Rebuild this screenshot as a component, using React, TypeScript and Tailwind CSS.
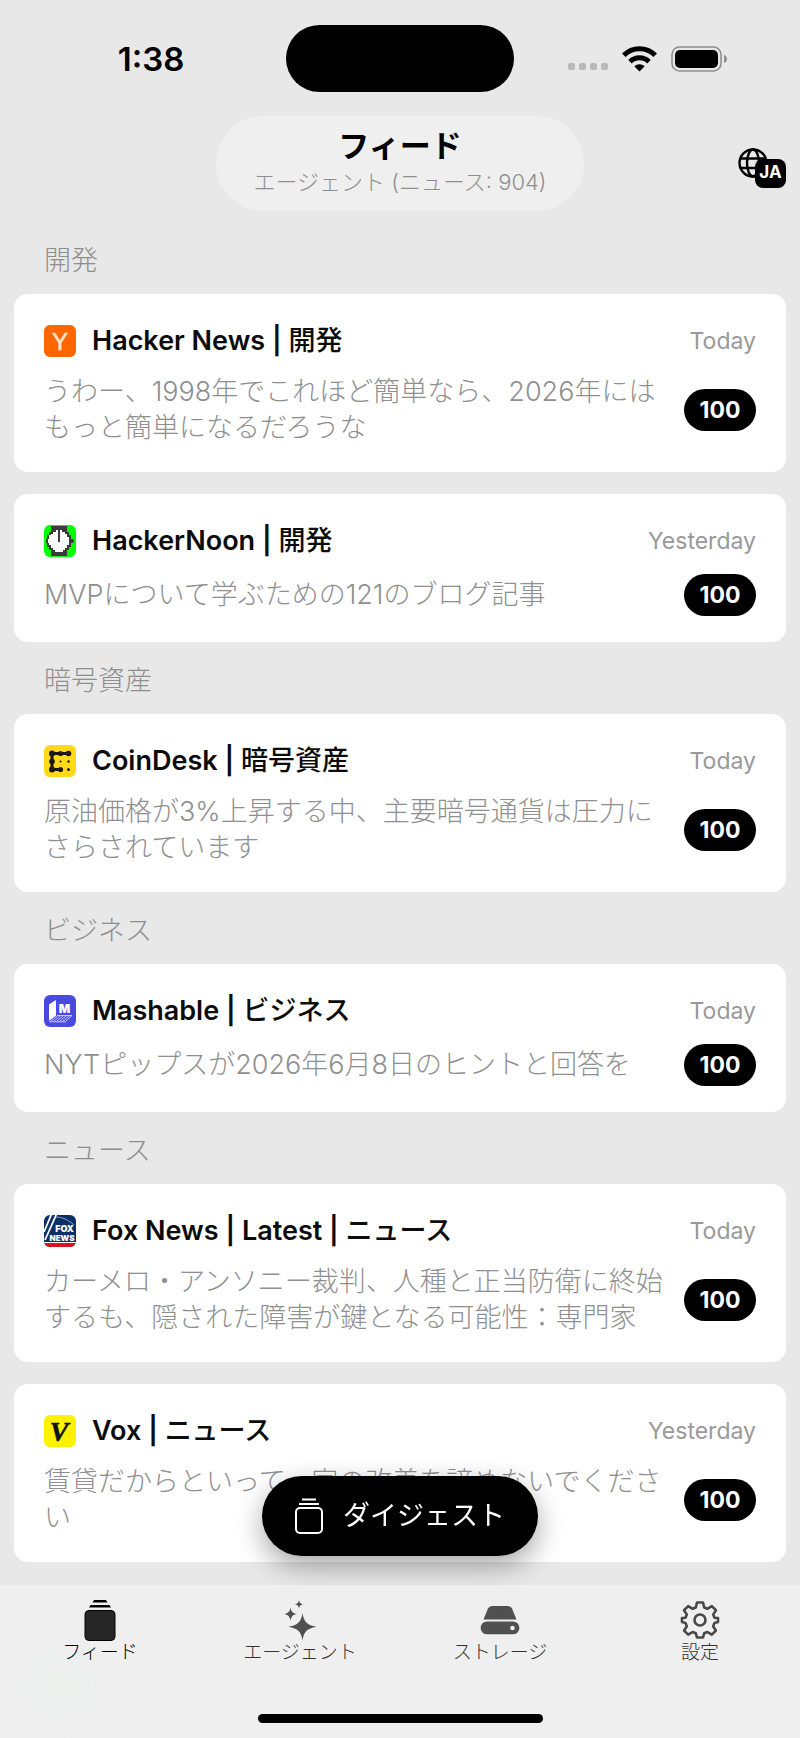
import type { ReactNode } from "react";

type Feed = {
  name: string;
  category: string;
  date: string;
  text: string;
  count: number;
  icon: ReactNode;
};

const YCombinatorIcon = () => (
  <svg viewBox="0 0 32 32" className="size-8 rounded-md bg-[#ff6600]">
    <text x="16" y="25" textAnchor="middle" fontSize="24" fill="#ffe3d0" stroke="#ffe3d0" strokeWidth=".6" fontFamily="Liberation Sans, sans-serif">Y</text>
  </svg>
);

const HackerNoonIcon = () => (
  <svg viewBox="0 0 32 32" shapeRendering="crispEdges" className="size-8 rounded-md bg-[#00ff00]">
    <path fill="#3b3b3b" d="M7 1h16v6h2v3h2v4h2v1h1v2h-1v1h-2v4h-2v3h-2v6H7v-6H5v-3H3v-4H2v-4h1v-4h2V7h2z" />
    <path fill="#fff" d="M9 7h3V5h6v2h3v2h2v3h2v8h-2v3h-2v2h-2v2h-8v-2H9v-2H7v-3H5v-2H4v-4h1v-4h2V9h2z" />
    <path fill="#3b3b3b" d="M10 5h2v2h-2zM18 5h2v2h-2zM14 5h2v12h-2z" />
  </svg>
);

const CoinDeskIcon = () => (
  <svg viewBox="0 0 32 32" className="size-8 rounded-md bg-[#ffd91a]">
    <path stroke="#1c1a10" strokeWidth="3" fill="none" d="M25 8.500H8V24.500h9" />
    <g fill="#1c1a10">
      <circle cx="8" cy="8.500" r="3" />
      <circle cx="16.500" cy="8.500" r="2.600" />
      <circle cx="24.500" cy="8.500" r="2.800" />
      <circle cx="8" cy="16.500" r="2.800" />
      <circle cx="8" cy="24.500" r="3" />
      <circle cx="16.500" cy="24.500" r="2.600" />
      <circle cx="16.500" cy="16.500" r="1" />
      <circle cx="24.500" cy="16.500" r="1.200" />
      <circle cx="24.500" cy="24.500" r="1.500" />
    </g>
  </svg>
);

const MashableIcon = () => (
  <svg viewBox="0 0 32 32" className="size-8 rounded-md bg-[#4b4ae0]">
    <path fill="#fff" d="M5 9.500 12 5v15.500L5 26z" />
    <text x="20.500" y="17.500" textAnchor="middle" fontSize="12" fontWeight="900" fill="#fff" fontFamily="Inter, sans-serif">M</text>
    <g stroke="#c9c8ff" strokeWidth="1">
      <path d="M6.500 26.500 13.500 20.500M9.500 26.500 16.500 20.500M12.500 26.500 19.500 20.500M15.500 26.500 22.500 20.500M18.500 26.500 25.500 20.500M21.500 26.500 28 20.500M13 20.500h15M5.500 26.800h16.500" />
    </g>
  </svg>
);

const FoxNewsIcon = () => (
  <svg viewBox="0 0 32 32" className="size-8 rounded-md bg-[#0b2f66]">
    <path fill="#d8121f" d="M0 28h32v4H0z" />
    <path fill="#fff" d="M0 27h32v1H0z" />
    <path stroke="#fff" strokeWidth="1.800" d="M0 17 8-2M1 25 13-2" />
    <path stroke="#8fa3c4" strokeWidth="1" fill="none" d="M12 2c6 0 13 3 18 8" />
    <text x="20.500" y="16.500" textAnchor="middle" fontSize="9" fontWeight="900" fill="#fff" fontFamily="Inter, sans-serif">FOX</text>
    <text x="18" y="25.500" textAnchor="middle" fontSize="8" fontWeight="900" fill="#fff" fontFamily="Inter, sans-serif">NEWS</text>
  </svg>
);

const VoxIcon = () => (
  <svg viewBox="0 0 32 32" className="size-8 rounded-md bg-[#fff200]">
    <text x="15" y="26" textAnchor="middle" fontSize="28" fontStyle="italic" fontWeight="700" fill="#111" stroke="#111" strokeWidth=".6" fontFamily="Liberation Serif, serif">V</text>
  </svg>
);

const sections: { title: string; feeds: Feed[] }[] = [
  {
    title: "開発",
    feeds: [
      {
        name: "Hacker News",
        category: "開発",
        date: "Today",
        text: "うわー、1998年でこれほど簡単なら、2026年にはもっと簡単になるだろうな",
        count: 100,
        icon: <YCombinatorIcon />,
      },
      {
        name: "HackerNoon",
        category: "開発",
        date: "Yesterday",
        text: "MVPについて学ぶための121のブログ記事",
        count: 100,
        icon: <HackerNoonIcon />,
      },
    ],
  },
  {
    title: "暗号資産",
    feeds: [
      {
        name: "CoinDesk",
        category: "暗号資産",
        date: "Today",
        text: "原油価格が3%上昇する中、主要暗号通貨は圧力にさらされています",
        count: 100,
        icon: <CoinDeskIcon />,
      },
    ],
  },
  {
    title: "ビジネス",
    feeds: [
      {
        name: "Mashable",
        category: "ビジネス",
        date: "Today",
        text: "NYTピップスが2026年6月8日のヒントと回答を",
        count: 100,
        icon: <MashableIcon />,
      },
    ],
  },
  {
    title: "ニュース",
    feeds: [
      {
        name: "Fox News | Latest",
        category: "ニュース",
        date: "Today",
        text: "カーメロ・アンソニー裁判、人種と正当防衛に終始するも、隠された障害が鍵となる可能性：専門家",
        count: 100,
        icon: <FoxNewsIcon />,
      },
      {
        name: "Vox",
        category: "ニュース",
        date: "Yesterday",
        text: "賃貸だからといって、家の改善を諦めないでください",
        count: 100,
        icon: <VoxIcon />,
      },
    ],
  },
];

const StatusBar = () => (
  <div className="grid grid-cols-[1fr_228px_1fr] items-center pt-[25px]">
    <span className="pl-4 text-center text-[33px] leading-8 font-semibold">1:38</span>
    <div className="h-[67px] rounded-full bg-black" />
    <div className="flex items-center pl-[54px]">
      <div className="flex gap-1 pt-4">
        <span className="size-[7px] rounded-xs bg-[#b9b9b9]" />
        <span className="size-[7px] rounded-xs bg-[#b9b9b9]" />
        <span className="size-[7px] rounded-xs bg-[#b9b9b9]" />
        <span className="size-[7px] rounded-xs bg-[#b9b9b9]" />
      </div>
      <svg viewBox="0 0 35 26" className="ml-[14px] h-[26px] w-[35px]" fill="none" stroke="#000" strokeWidth="5">
        <path d="M1.800 9.200a22.300 22.300 0 0 1 31.400 0" />
        <path d="M8 15.700a13.600 13.600 0 0 1 19 0" />
        <path d="M17.500 25.500 12.300 20.300a7.400 7.400 0 0 1 10.400 0z" fill="#000" stroke="none" />
      </svg>
      <svg viewBox="0 0 56 26" className="ml-[14px] h-[26px] w-14">
        <rect x="1" y="1" width="49" height="24" rx="7.500" fill="none" stroke="#8f8f8f" strokeWidth="1.600" />
        <rect x="4" y="4" width="43" height="18" rx="5" />
        <path d="M53 9c4 1 4 7 0 8z" fill="#8f8f8f" />
      </svg>
    </div>
  </div>
);

const Header = () => (
  <header className="mt-6 grid grid-cols-[1fr_auto_1fr] items-center">
    <div className="col-start-2 flex h-[95px] w-[368px] flex-col items-center justify-center rounded-full bg-[#efefef]">
      <h1 className="text-[31px] leading-9 font-bold">フィード</h1>
      <p className="text-[22px] leading-9 font-light text-[#8f8f8f]">エージェント (ニュース: 904)</p>
    </div>
    <button aria-label="言語" className="relative mt-2 mr-[14px] flex h-10 w-12 items-start justify-self-end">
      <svg viewBox="0 0 30 30" className="size-[30px]" fill="none" stroke="#000" strokeWidth="2.400">
        <circle cx="15" cy="15" r="13.500" />
        <ellipse cx="15" cy="15" rx="6" ry="13.500" />
        <path d="M3 10.500h24M3 20h24" />
      </svg>
      <span className="absolute right-0 bottom-0 flex h-[29px] w-[31px] items-center justify-center rounded-lg bg-black text-[17px] font-bold text-white">
        JA
      </span>
    </button>
  </header>
);

const FeedCard = ({ feed }: { feed: Feed }) => (
  <article className="rounded-[14px] bg-white px-[30px] pt-[31px] pb-[26px]">
    <div className="flex h-8 items-center">
      {feed.icon}
      <h3 className="ml-4 flex-1 text-[27px] leading-8 font-semibold text-[#0c0c0c]">
        {feed.name} | <span className="font-medium">{feed.category}</span>
      </h3>
      <time className="text-[23px] text-[#999]">{feed.date}</time>
    </div>
    <div className="mt-[17px] flex items-center justify-between gap-4">
      <p className="text-[27px] leading-9 font-light text-[#8f8f8f]">{feed.text}</p>
      <span className="flex h-[42px] w-[72px] shrink-0 items-center justify-center rounded-full bg-black text-[23px] font-bold text-white">
        {feed.count}
      </span>
    </div>
  </article>
);

const FeedIcon = () => (
  <svg viewBox="0 0 32 42" className="h-[42px] w-8">
    <rect x="1" y="11.500" width="30" height="30" rx="4" fill="#262626" stroke="#000" strokeWidth="1" />
    <path d="M5 8.500 6.500 6h19l1.500 2.500zM8.500 3.500 10 1h12l1.500 2.500z" fill="#000" />
  </svg>
);

const SparklesIcon = () => (
  <svg viewBox="0 0 34 42" className="h-[42px] w-[34px]" fill="#505050">
    <path d="M19.500 14c1.200 8.500 4.500 12.200 14 13.800-9.500 1.600-12.800 5.300-14 13.800-1.200-8.500-4.500-12.200-14-13.800 9.500-1.600 12.800-5.300 14-13.800z" />
    <path d="M7.500 8.500c.8 4.200 2.200 5.800 6.500 6.600-4.300.8-5.700 2.400-6.500 6.600-.8-4.200-2.200-5.800-6.500-6.600 4.300-.8 5.700-2.400 6.500-6.600z" />
    <path d="M16 1c.5 2.800 1.400 3.700 4.200 4.200-2.800.5-3.700 1.400-4.200 4.200-.5-2.800-1.400-3.700-4.200-4.200 2.800-.5 3.700-1.400 4.200-4.200z" />
  </svg>
);

const DriveIcon = () => (
  <svg viewBox="0 0 40 42" className="h-[42px] w-10" fill="#505050">
    <path d="M3.500 20.500 8 9.500q1.200-2.500 4-2.500h16q2.800 0 4 2.500l4.500 11z" />
    <path fillRule="evenodd" d="M7 22.500h26a6.400 6.400 0 0 1 0 12.800H7a6.400 6.400 0 0 1 0-12.800zM32.500 26.700a2.300 2.300 0 1 0 0 4.600 2.300 2.300 0 0 0 0-4.600z" />
  </svg>
);

const GearIcon = () => (
  <svg viewBox="0 0 40 42" className="h-[42px] w-10" fill="none" stroke="#484848" strokeWidth="2.600" strokeLinejoin="round">
    <g>
      <path d="M17 3.500h6l1.200 5 3.200 1.300 4.400-2.700 4.100 4.100-2.700 4.400 1.300 3.200 3.500.2v4l-3.500 1-1.300 3.200 2.700 4.400-4.100 4.100-4.400-2.700-3.200 1.300-1.200 4.200h-6l-1.200-4.200-3.200-1.300-4.400 2.700-4.100-4.100 2.700-4.400-1.300-3.200-3.500-1v-4l3.500-.2 1.300-3.200-2.700-4.400 4.100-4.100 4.400 2.700 3.200-1.300z" />
      <circle cx="20" cy="21" r="5.500" />
    </g>
  </svg>
);

const tabs = [
  { label: "フィード", icon: <FeedIcon />, active: true },
  { label: "エージェント", icon: <SparklesIcon />, active: false },
  { label: "ストレージ", icon: <DriveIcon />, active: false },
  { label: "設定", icon: <GearIcon />, active: false },
];

const TabBar = () => (
  <footer className="fixed inset-x-0 bottom-0">
    <button className="absolute bottom-full left-1/2 mb-[29px] flex h-20 w-[276px] -translate-x-1/2 items-center justify-center gap-5 rounded-full bg-black text-[27px] text-white shadow-[0_10px_28px_rgba(0,0,0,0.35)]">
      <svg viewBox="0 0 28 36" className="h-9 w-7" fill="none" stroke="#fff" strokeWidth="2">
        <rect x="1" y="10" width="26" height="25" rx="4" />
        <path d="M4 6h20M7 1.500h14" />
      </svg>
      ダイジェスト
    </button>
    <div className="relative overflow-hidden bg-[#efefef] pt-[14px] pb-[15px]">
      <div className="absolute bottom-9 left-11 size-9 rounded-full bg-[#e6f2eb] blur-lg" />
      <nav className="relative grid grid-cols-4">
        {tabs.map((tab) => (
          <a
            key={tab.label}
            href="#"
            className={`flex flex-col items-center text-[19px] leading-6 ${tab.active ? "text-black" : "text-[#333]"}`}
          >
            {tab.icon}
            <span className="font-light">{tab.label}</span>
          </a>
        ))}
      </nav>
      <div className="mx-auto mt-[49px] h-[9px] w-[285px] rounded-full bg-black" />
    </div>
  </footer>
);

const App = () => {
  return (
    <div lang="ja" className="min-h-screen bg-[#e8e8e8] pb-44 font-['Inter','Noto_Sans_CJK_JP',sans-serif] text-black">
      <StatusBar />
      <Header />
      <main className="mt-[11px] px-[14px]">
        {sections.map((section) => (
          <section key={section.title}>
            <h2 className="flex h-[72px] items-center pt-[7px] pl-[30px] text-[27px] font-light text-[#8f8f8f]">{section.title}</h2>
            <div className="flex flex-col gap-[22px]">
              {section.feeds.map((feed) => (
                <FeedCard key={feed.name} feed={feed} />
              ))}
            </div>
          </section>
        ))}
      </main>
      <TabBar />
    </div>
  );
};

export default App;
